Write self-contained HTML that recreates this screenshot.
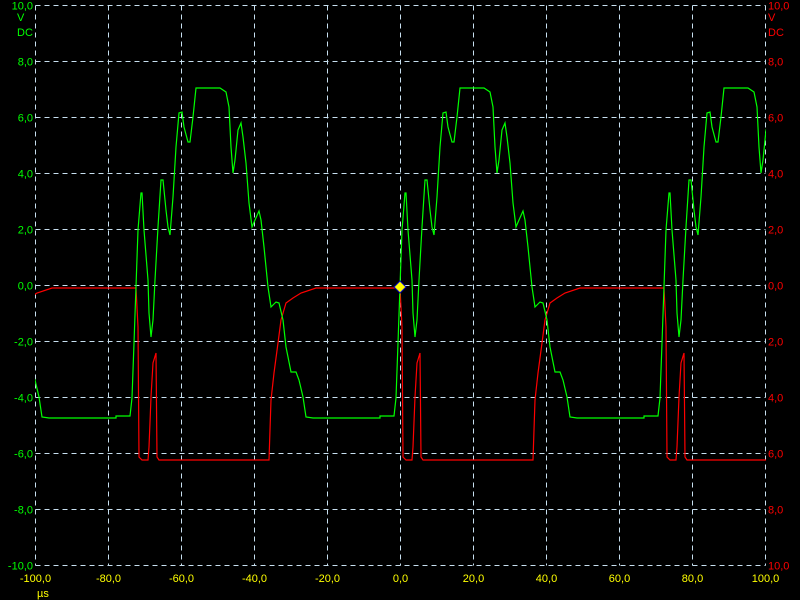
<!DOCTYPE html>
<html><head><meta charset="utf-8"><style>
html,body{margin:0;padding:0;background:#000;width:800px;height:600px;overflow:hidden}
svg{display:block}
text{font-family:"Liberation Sans",sans-serif;font-size:11px}
</style></head><body>
<svg id="s" width="800" height="600" xmlns="http://www.w3.org/2000/svg">
<defs><clipPath id="c"><rect x="35" y="5" width="731" height="562"/></clipPath></defs>
<g id="grid" stroke="#c8e0f0" stroke-width="1" stroke-dasharray="5,4"></g>
<g id="lab"></g>
<g clip-path="url(#c)">
<polyline id="red" fill="none" stroke="#ff0000" stroke-width="1.2"/>
<polyline id="grn" fill="none" stroke="#00ff00" stroke-width="1.2"/>
</g>
<polygon points="400,281 406,287 400,293 394,287" fill="#ffff00" stroke="#0000c0" stroke-width="1"/>
</svg>
<script>
var NS="http://www.w3.org/2000/svg",g=document.getElementById('grid'),lab=document.getElementById('lab');
function el(t,a,p,txt){var e=document.createElementNS(NS,t);for(var k in a)e.setAttribute(k,a[k]);if(txt!=null)e.textContent=txt;p.appendChild(e);return e;}
for(var i=0;i<=10;i++){var x=35.5+i*73;el('line',{x1:x,y1:5.5,x2:x,y2:565.5},g);}
for(var j=0;j<=10;j++){var y=5.5+j*56;el('line',{x1:35.5,y1:y,x2:765.5,y2:y},g);}
for(var j=0;j<=10;j++){var v=10-2*j,y=5.5+j*56+4;
 el('text',{x:33,y:y,'text-anchor':'end',fill:'#00ff00'},lab,v.toFixed(1).replace('.',','));
 el('text',{x:768,y:y,fill:'#ff0000'},lab,Math.abs(v).toFixed(1).replace('.',','));}
el('text',{x:17,y:21,fill:'#00ff00'},lab,'V');el('text',{x:17,y:36,fill:'#00ff00'},lab,'DC');
el('text',{x:768,y:21,fill:'#ff0000'},lab,'V');el('text',{x:768,y:36,fill:'#ff0000'},lab,'DC');
for(var i=0;i<=10;i++){var v=-100+20*i,x=35.5+i*73;
 el('text',{x:x,y:582,'text-anchor':'middle',fill:'#ffff00'},lab,v.toFixed(1).replace('.',','));}
el('text',{x:37,y:597,fill:'#ffff00'},lab,'µs');
var G=[[380,416],[394,416],[396,398],[398,343],[402,230],[405,193],[406,193],[408,230],[412,280],[413,313],[415,337],[417,320],[419,280],[422,227],[425,180],[427,180],[430,210],[432,227],[434,235],[437,197],[440,147],[443,113],[446,112],[448,127],[452,142],[454,142],[457,117],[460,88],[484,88],[490,92],[493,107],[495,147],[497,173],[499,160],[502,130],[505,123],[507,137],[510,163],[513,203],[516,227],[519,220],[523,211],[525,220],[528,247],[532,287],[535,307],[540,302],[543,303],[547,320],[550,347],[555,372],[560,372],[563,380],[567,397],[570,417],[577,418],[644,418]];
var R=[[380,288],[400,288],[402,327],[403,457],[406,460],[412,460],[413,447],[415,397],[417,363],[420,353],[421,457],[423,460],[533,460],[535,400],[538,373],[542,343],[545,320],[550,303],[557,298],[565,293],[580,288],[644,288]];
function build(P){var out=[];[-528,-264,0,264].forEach(function(o){P.forEach(function(p){out.push((p[0]+o)+','+p[1]);});});return out.join(' ');}
document.getElementById('grn').setAttribute('points',build(G));
document.getElementById('red').setAttribute('points',build(R));
</script>
</body></html>
